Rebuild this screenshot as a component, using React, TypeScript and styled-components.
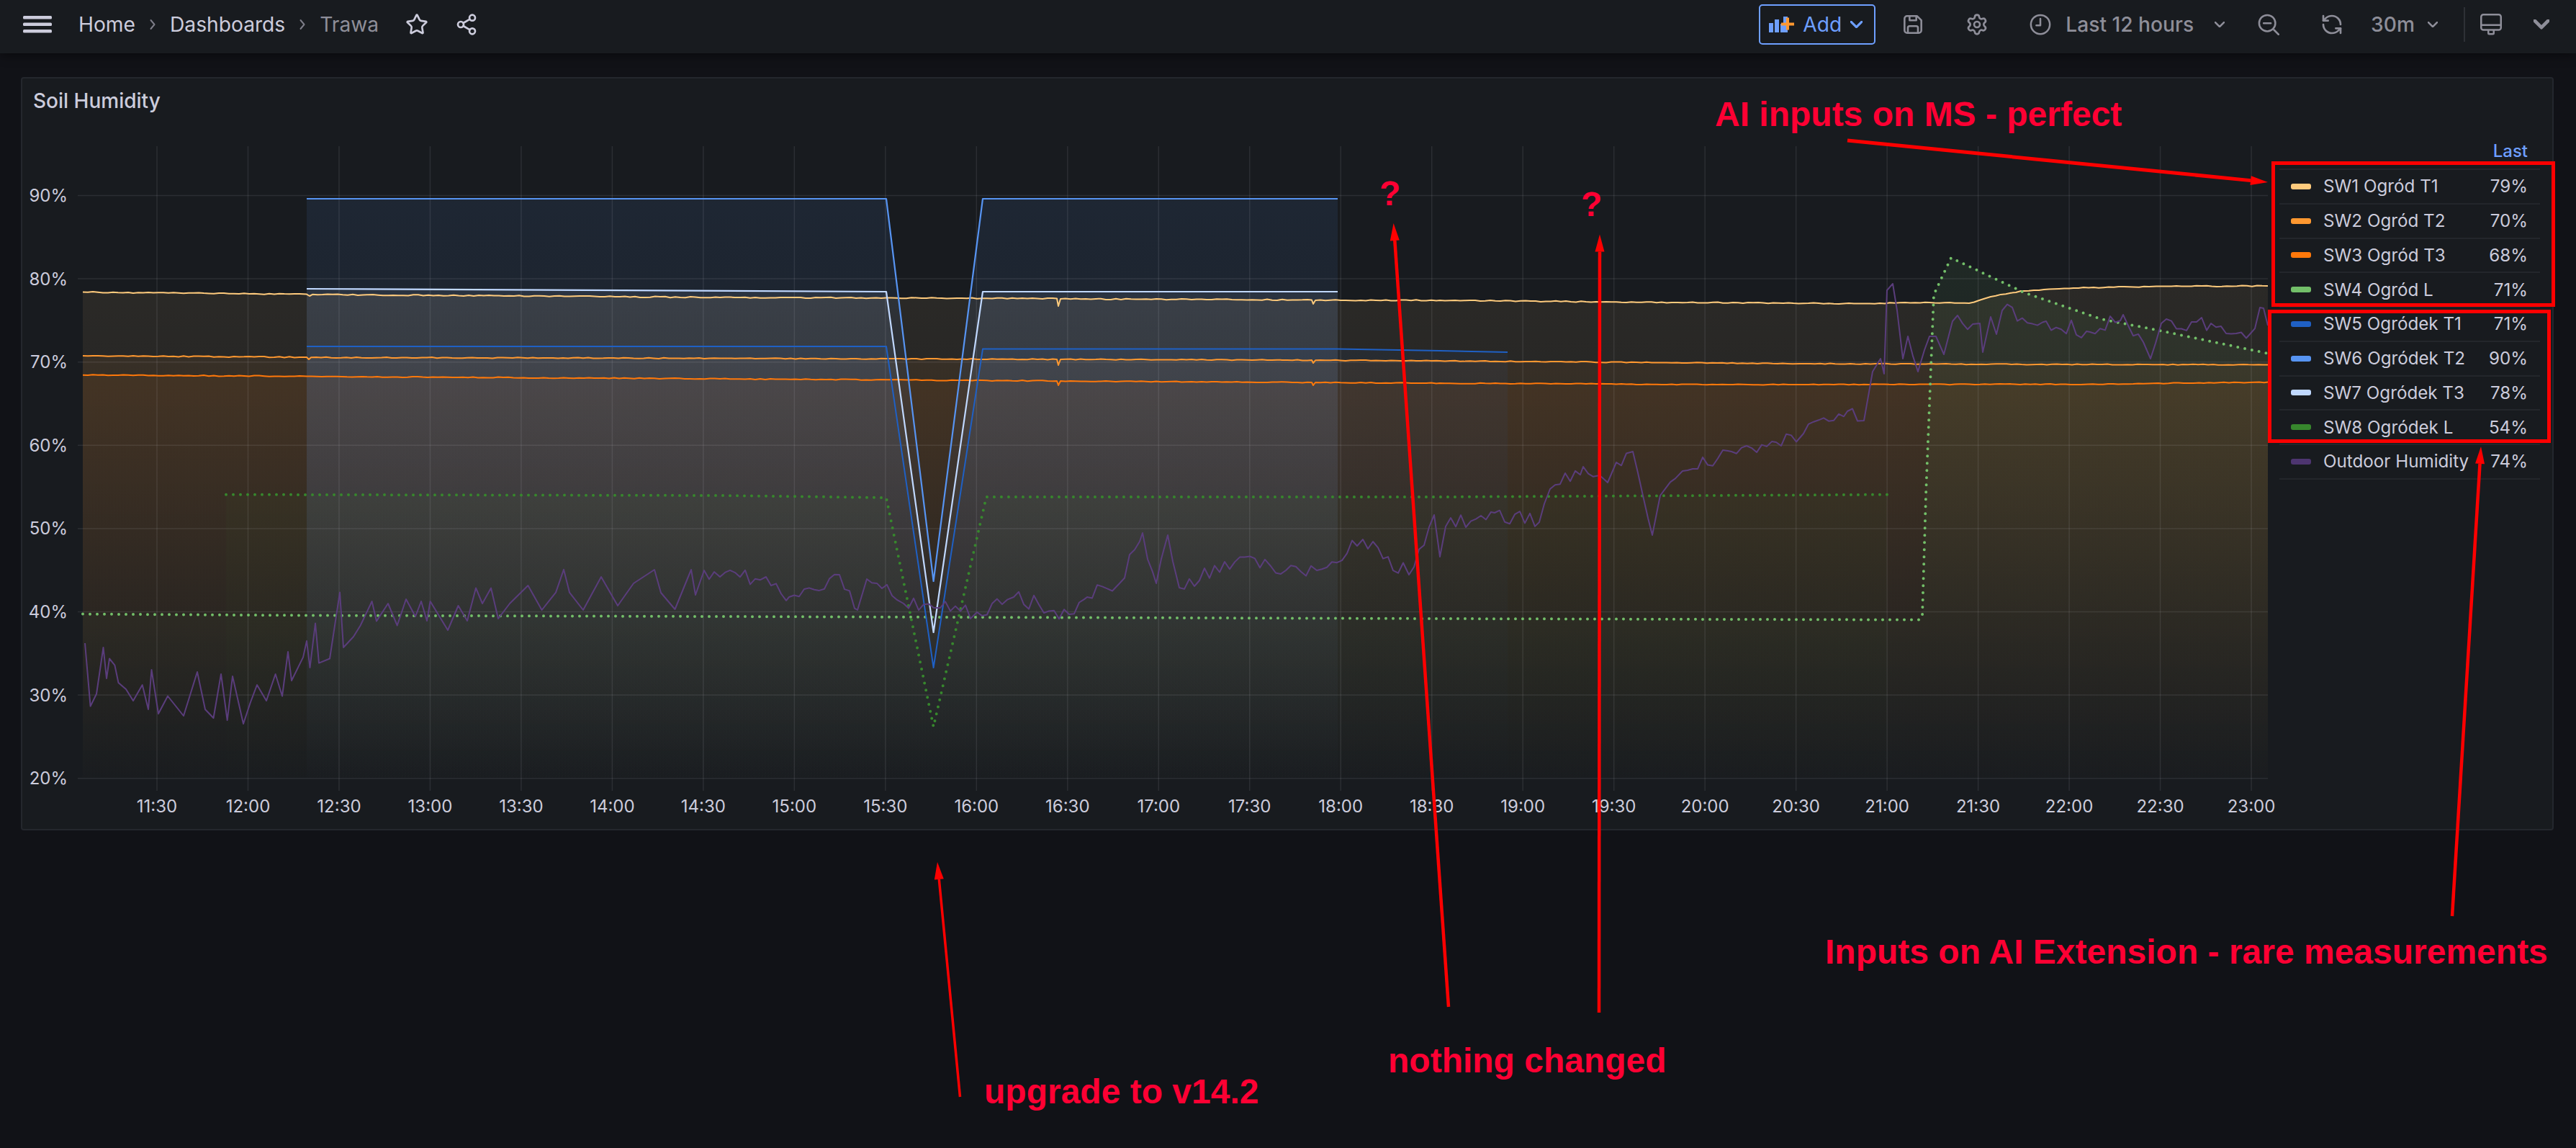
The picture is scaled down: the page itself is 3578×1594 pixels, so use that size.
import { Fragment } from "react";
import styled, { createGlobalStyle } from "styled-components";
import { RefreshCcw, Settings, Share2, Star } from "lucide-react";

type Point = [number, number];

const PLOT_TOP = 205;
const PLOT_BOTTOM = 1100;
const PLOT_LEFT = 108;
const PLOT_RIGHT = 3150;

const GlobalStyle = createGlobalStyle`
  html, body {
    margin: 0;
    background: #111217;
  }
`;

const Styled_Page = styled.div`
  position: relative;
  display: flex;
  flex-direction: column;
  min-height: 100vh;
  overflow: hidden;
  background: #111217;
  color: #ccccdc;
  font-family: Inter, "Noto Sans", sans-serif;
`;

const Styled_TopBar = styled.header`
  display: flex;
  align-items: center;
  flex: none;
  box-sizing: border-box;
  height: 74px;
  padding: 0 37px 6px 32px;
  background: #181b1f;
  box-shadow: 0 3px 14px rgba(0, 0, 0, 0.45);
  font-size: 28.2px;
  position: relative;
  z-index: 1;
`;

const Styled_Tool = styled.span<{ $ml?: number; $muted?: boolean; $color?: string }>`
  display: flex;
  align-items: center;
  flex: none;
  margin-left: ${(p) => p.$ml ?? 0}px;
  color: ${(p) => p.$color ?? (p.$muted ? "#8e8e99" : "#ccccdc")};
  font-weight: ${(p) => (p.$muted ? 500 : 400)};
  white-space: nowrap;
`;

const Styled_Toolbar = styled.div`
  display: flex;
  align-items: center;
  margin-left: auto;
`;

const Styled_AddButton = styled.button`
  display: flex;
  align-items: center;
  width: 162px;
  height: 56px;
  box-sizing: border-box;
  padding: 0 0 0 12px;
  border: 2px solid #6e9fff;
  border-radius: 5px;
  background: transparent;
  color: #6e9fff;
  font: 500 28.2px Inter, sans-serif;
`;

const Styled_Divider = styled.span`
  flex: none;
  width: 2px;
  height: 48px;
  margin-left: 36px;
  background: #2e3136;
`;

const Styled_Main = styled.main`
  flex: 1;
  padding: 33px 31px 0 29px;
`;

const Styled_Panel = styled.section`
  display: flex;
  flex-direction: column;
  box-sizing: border-box;
  height: 1046px;
  border: 2px solid #24272d;
  border-radius: 4px;
  background: #181b1f;
`;

const Styled_PanelTitle = styled.h2`
  flex: none;
  height: 66px;
  margin: 0;
  padding-left: 15px;
  font-size: 28px;
  font-weight: 500;
  line-height: 62px;
`;

const Styled_PanelBody = styled.div`
  display: flex;
  flex: 1;
  min-height: 0;
`;

const Styled_ChartSvg = styled.svg`
  display: block;
  flex: none;
  width: 3129px;
  height: 976px;
`;

const Styled_AxisText = styled.text`
  fill: #ccccdc;
  font-family: Inter, sans-serif;
  font-size: 24px;
`;

const Styled_Legend = styled.div`
  flex: 1;
  padding: 13px 17px 0 6px;
`;

const Styled_LegendHead = styled.div`
  height: 46px;
  padding-right: 17px;
  color: #6e9fff;
  font-size: 24px;
  font-weight: 500;
  line-height: 44px;
  text-align: right;
`;

const Styled_LegendRow = styled.div`
  display: flex;
  align-items: center;
  box-sizing: border-box;
  height: 47.75px;
  padding: 0 17px 0 16px;
  border-top: 2px solid #23262b;
  font-size: 24.2px;

  &:last-child {
    height: 49.75px;
    border-bottom: 2px solid #23262b;
  }
`;

const Styled_Swatch = styled.i<{ $color: string }>`
  flex: none;
  width: 28px;
  height: 8px;
  margin-right: 17px;
  border-radius: 3px;
  background: ${(p) => p.$color};
`;

const Styled_LegendValue = styled.span`
  margin-left: auto;
`;

const Styled_Overlay = styled.svg`
  position: absolute;
  left: 0;
  top: 0;
  z-index: 2;
  width: 3578px;
  height: 1594px;
  pointer-events: none;
`;

const Styled_Note = styled.span<{ $left: number; $baseline: number; $size: number }>`
  position: absolute;
  z-index: 3;
  left: ${(p) => p.$left}px;
  top: ${(p) => p.$baseline - p.$size * 0.8465}px;
  color: #ff0033;
  font-family: "Liberation Sans", Arial, sans-serif;
  font-size: ${(p) => p.$size}px;
  font-weight: 700;
  line-height: 1;
  white-space: nowrap;
`;

function makeRandom(seed: number) {
  let a = seed;
  return () => {
    a = (a + 0x6d2b79f5) | 0;
    let t = Math.imul(a ^ (a >>> 15), 1 | a);
    t = (t + Math.imul(t ^ (t >>> 7), 61 | t)) ^ t;
    return ((t ^ (t >>> 14)) >>> 0) / 4294967296;
  };
}

// sensors report small wobbles: fill the gaps between traced points with noise
function wobble(points: Point[], amp: number, step: number, seed: number, fromX = 0): Point[] {
  const random = makeRandom(seed);
  const out: Point[] = [];
  for (let i = 0; i < points.length - 1; i++) {
    const [x0, y0] = points[i];
    const [x1, y1] = points[i + 1];
    out.push(points[i]);
    if (x0 < fromX || x1 - x0 < step * 2) continue;
    for (let x = x0 + step; x < x1 - step / 2; x += step) {
      const y = y0 + ((y1 - y0) * (x - x0)) / (x1 - x0);
      out.push([x, y + (random() - 0.5) * 2 * amp]);
    }
  }
  out.push(points[points.length - 1]);
  return out;
}

const toPath = (points: Point[]) =>
  points.map(([x, y], i) => `${i ? "L" : "M"}${x.toFixed(1)} ${y.toFixed(1)}`).join("");

const toArea = (points: Point[]) =>
  `${toPath(points)}L${points[points.length - 1][0]} ${PLOT_BOTTOM}L${points[0][0]} ${PLOT_BOTTOM}Z`;

const sw1: Point[] = [
  [115, 407.6], [426, 410.6], [430, 413], [434, 410.8], [1000, 415], [1468, 416.5], [1470, 427], [1473, 417], [1822, 418.5],
  [1824, 424], [1827, 419], [2000, 419], [2330, 422], [2590, 423.5], [2680, 422], [2735, 423], [2765, 414], [2811, 406],
  [2880, 402], [2995, 399.6], [3150, 399]
];
const sw2: Point[] = [
  [115, 496], [426, 498], [429, 501], [432, 498.3], [1000, 499.5], [1468, 501], [1470, 509], [1473, 501], [1822, 502],
  [1824, 506], [1827, 502.3], [2000, 503], [2500, 507], [3150, 508.6]
];
const sw3: Point[] = [
  [115, 522.7], [426, 524.6], [1000, 528], [1468, 531], [1470, 537], [1473, 531], [1822, 533], [1824, 537], [1827, 533],
  [2000, 534], [2400, 536], [2900, 535.6], [3150, 532.5]
];
const sw4: Point[] = [
  [115, 854.6], [426, 856.5], [1000, 858], [2000, 861], [2666, 862.6], [2670, 858], [2675, 690], [2681, 537], [2686, 411],
  [2710, 360], [2811, 408], [2918, 445], [2995, 460], [3150, 492.7]
];
const sw5: Point[] = [[426, 483], [1231, 483], [1296.6, 929], [1365, 486.6], [1858, 486.6], [2000, 489], [2094, 491]];
const sw6: Point[] = [[426, 278], [1231, 278], [1296.6, 809], [1365, 278], [1858, 278]];
const sw7: Point[] = [[426, 403], [1231, 407], [1296.6, 880], [1365, 407], [1858, 407]];
const sw8: Point[] = [[314, 688.7], [1000, 690], [1231, 693], [1296.6, 1011], [1370, 692], [2000, 692], [2621, 688.7]];

const outdoor: Point[] = [
  [118, 895], [125.6, 982.6], [134, 965.5], [143.5, 901], [148, 944], [152, 916.5], [159.4, 925.7], [164.5, 950], [175, 959],
  [185, 975], [197.7, 953], [206, 987], [210.5, 932], [220, 993], [233, 968.5], [255, 996], [274, 935], [285, 987],
  [296.5, 999], [307, 938], [315.7, 1002], [323, 941], [338, 1007], [347.6, 978], [357, 953], [370, 975], [382.6, 938],
  [392, 968.5], [400, 907], [405, 947], [421, 914.6], [426, 892], [430.5, 929], [438, 867.5], [443, 922.6], [458, 916.5],
  [472, 824.6], [477, 901], [491, 886], [500.6, 870.5], [516.6, 837], [523, 864.4], [539, 840], [551.7, 870.5], [564, 834],
  [577, 858], [585, 837], [593, 864], [597.6, 837], [622, 877], [636.5, 843], [649, 864], [661, 818.5], [670, 840],
  [682, 818.5], [692, 861], [708, 840], [733.4, 815], [752.6, 849], [772, 824.6], [783, 792.8], [791, 824.6], [810, 849],
  [835, 803], [858, 843], [880, 812], [909, 793], [918, 825], [937.5, 848], [960, 793], [966, 828], [978, 794],
  [1000, 803], [1064, 803], [1096, 831], [1166, 800], [1191, 849], [1204, 806], [1255, 840], [1306, 846], [1357, 852],
  [1408, 831], [1485, 855], [1510, 831], [1555, 812], [1587, 742], [1606, 812], [1622, 745], [1638, 818], [1701, 782],
  [1765, 788], [1829, 794], [1893, 751], [1957, 800], [1992, 717], [2000, 775], [2008, 733], [2076, 714], [2138, 727],
  [2153, 681], [2199, 650], [2222, 662], [2233, 672], [2245, 644], [2268, 629], [2295, 745], [2306, 690], [2337, 656],
  [2405, 629], [2467, 616], [2505, 604], [2566, 573], [2589, 586], [2601, 518], [2612, 500], [2617, 521], [2621, 405],
  [2629, 396], [2635, 433], [2643, 500], [2650, 469], [2664, 518], [2673, 488], [2689, 469], [2700, 494], [2712, 448],
  [2750, 451], [2754, 491], [2765, 442], [2773, 466], [2781, 433], [2842, 448], [2903, 463], [2949, 439], [2987, 500],
  [3002, 451], [3071, 451], [3125, 466], [3144, 430], [3150, 454]
];

interface Series {
  id: string;
  color: string;
  points: Point[];
  width: number;
  dotted?: boolean;
  filled?: boolean;
}

const series: Series[] = [
  { id: "sw1", color: "#ffcb7d", points: wobble(sw1, 0.7, 7, 1), width: 2, filled: true },
  { id: "sw2", color: "#ff9830", points: wobble(sw2, 0.6, 7, 2), width: 2, filled: true },
  { id: "sw3", color: "#ff780a", points: wobble(sw3, 0.6, 7, 3), width: 2, filled: true },
  { id: "sw4", color: "#73bf69", points: sw4, width: 4, dotted: true, filled: true },
  { id: "sw5", color: "#1f60c4", points: sw5, width: 2, filled: true },
  { id: "sw6", color: "#5794f2", points: sw6, width: 2.2, filled: true },
  { id: "sw7", color: "#c0d8ff", points: sw7, width: 2.2, filled: true },
  { id: "sw8", color: "#37872d", points: sw8, width: 4, dotted: true, filled: true },
  { id: "outdoor", color: "#5a3d7c", points: wobble(outdoor, 11, 7, 4, 978), width: 2 }
];

const legend = [
  { name: "SW1 Ogród T1", value: "79%", color: "#ffcb7d" },
  { name: "SW2 Ogród T2", value: "70%", color: "#ff9830" },
  { name: "SW3 Ogród T3", value: "68%", color: "#ff780a" },
  { name: "SW4 Ogród L", value: "71%", color: "#73bf69" },
  { name: "SW5 Ogródek T1", value: "71%", color: "#1f60c4" },
  { name: "SW6 Ogródek T2", value: "90%", color: "#5794f2" },
  { name: "SW7 Ogródek T3", value: "78%", color: "#c0d8ff" },
  { name: "SW8 Ogródek L", value: "54%", color: "#37872d" },
  { name: "Outdoor Humidity", value: "74%", color: "#4d3570" }
];

const yTicks = [90, 80, 70, 60, 50, 40, 30, 20];
const yOf = (v: number) => 273.5 + (90 - v) * 11.56;
const xTicks = Array.from({ length: 24 }, (_, i) => {
  const minutes = 11 * 60 + 30 + i * 30;
  const label = `${Math.floor(minutes / 60)}:${minutes % 60 === 0 ? "00" : "30"}`;
  return { label, x: 218 + i * 126.48 };
});

function Chart() {
  return (
    <Styled_ChartSvg viewBox="31 177 3129 976">
      <defs>
        {series
          .filter((s) => s.filled)
          .map((s) => (
            <linearGradient key={s.id} id={`fill-${s.id}`} gradientUnits="userSpaceOnUse" x1="0" y1={PLOT_TOP} x2="0" y2={PLOT_BOTTOM}>
              <stop offset="0" stopColor={s.color} stopOpacity="0.105" />
              <stop offset="1" stopColor={s.color} stopOpacity="0" />
            </linearGradient>
          ))}
      </defs>

      {series
        .filter((s) => s.filled)
        .map((s) => (
          <path key={s.id} d={toArea(s.points)} fill={`url(#fill-${s.id})`} />
        ))}

      {yTicks.map((v) => (
        <Fragment key={v}>
          <line x1={PLOT_LEFT} x2={PLOT_RIGHT} y1={yOf(v)} y2={yOf(v)} stroke="rgba(240,245,255,0.09)" strokeWidth="1.5" />
          <Styled_AxisText x="94" y={yOf(v) + 2} textAnchor="end" dominantBaseline="middle">
            {v}%
          </Styled_AxisText>
        </Fragment>
      ))}
      {xTicks.map((t) => (
        <Fragment key={t.label}>
          <line x1={t.x} x2={t.x} y1={PLOT_TOP} y2={PLOT_BOTTOM} stroke="rgba(240,245,255,0.09)" strokeWidth="1.5" />
          <Styled_AxisText x={t.x} y="1123" textAnchor="middle" dominantBaseline="middle">
            {t.label}
          </Styled_AxisText>
        </Fragment>
      ))}

      {series.map((s) => (
        <path
          key={s.id}
          d={toPath(s.points)}
          fill="none"
          stroke={s.color}
          strokeWidth={s.width}
          strokeLinejoin="round"
          strokeLinecap={s.dotted ? "round" : "butt"}
          strokeDasharray={s.dotted ? "0 10" : undefined}
        />
      ))}
    </Styled_ChartSvg>
  );
}

function Arrow({ from, to, width = 4.5 }: { from: Point; to: Point; width?: number }) {
  const [fx, fy] = from;
  const [tx, ty] = to;
  const len = Math.hypot(tx - fx, ty - fy);
  const ux = (tx - fx) / len;
  const uy = (ty - fy) / len;
  const bx = tx - ux * 24;
  const by = ty - uy * 24;
  const nx = -uy * 6.5;
  const ny = ux * 6.5;
  return (
    <>
      <line x1={fx} y1={fy} x2={bx} y2={by} stroke="#ff0000" strokeWidth={width} />
      <polygon points={`${tx},${ty} ${bx + nx},${by + ny} ${bx - nx},${by - ny}`} fill="#ff0000" />
    </>
  );
}

function Annotations() {
  return (
    <>
      <Styled_Overlay viewBox="0 0 3578 1594">
        <rect x="3157.5" y="226.5" width="389" height="197" fill="none" stroke="#ff0000" strokeWidth="5" />
        <rect x="3152.5" y="432.5" width="388" height="180" fill="none" stroke="#ff0000" strokeWidth="5" />
        <Arrow from={[2566, 195]} to={[3150, 253]} width={5} />
        <Arrow from={[2012, 1398]} to={[1935.6, 310]} />
        <Arrow from={[2221, 1406]} to={[2222, 325.5]} />
        <Arrow from={[3406, 1272]} to={[3446, 620]} />
        <Arrow from={[1333.5, 1523]} to={[1302, 1197]} width={3.5} />
      </Styled_Overlay>
      <Styled_Note $left={2382} $baseline={176} $size={48}>AI inputs on MS - perfect</Styled_Note>
      <Styled_Note $left={1916} $baseline={286} $size={48}>?</Styled_Note>
      <Styled_Note $left={2196} $baseline={301} $size={48}>?</Styled_Note>
      <Styled_Note $left={2535} $baseline={1339} $size={48}>Inputs on AI Extension - rare measurements</Styled_Note>
      <Styled_Note $left={1928} $baseline={1490} $size={48}>nothing changed</Styled_Note>
      <Styled_Note $left={1367} $baseline={1533} $size={48}>upgrade to v14.2</Styled_Note>
    </>
  );
}

const MenuIcon = () => (
  <svg width="40" height="24" viewBox="0 0 40 24" fill="currentColor">
    <rect width="40" height="4.5" rx="1.5" y="0" />
    <rect width="40" height="4.5" rx="1.5" y="9.5" />
    <rect width="40" height="4.5" rx="1.5" y="19" />
  </svg>
);

const Chevron = ({ size = 14, width = 2.6 }: { size?: number; width?: number }) => (
  <svg width={size} height={size * 0.62} viewBox="5 8.5 14 8.5" fill="none" stroke="currentColor" strokeWidth={width} strokeLinecap="round" strokeLinejoin="round">
    <path d="M6 9.5l6 6 6-6" />
  </svg>
);

const CrumbArrow = () => (
  <svg width="8" height="16" viewBox="0 0 8 16" fill="none" stroke="#7d7d88" strokeWidth="2" strokeLinecap="round" strokeLinejoin="round">
    <path d="M1.5 2l5 6-5 6" />
  </svg>
);

const AddIcon = () => (
  <svg width="36" height="24" viewBox="0 0 36 24">
    <g fill="#6e9fff">
      <rect x="0" y="10" width="6" height="13" />
      <rect x="8" y="5" width="6" height="18" />
      <rect x="16" y="11" width="6" height="12" />
      <rect x="20" y="1" width="6" height="22" />
    </g>
    <path d="M29 7v7h7v4h-7v6h-4v-6h-7v-4h7V7z" transform="translate(-1 -4.5)" fill="#ff9830" />
  </svg>
);

const SaveIcon = () => (
  <svg width="28" height="28" viewBox="0 0 24 24" fill="none" stroke="currentColor" strokeWidth="2.2" strokeLinejoin="round">
    <path d="M2 5a3 3 0 0 1 3-3h12l5 5v12a3 3 0 0 1-3 3H5a3 3 0 0 1-3-3z" />
    <path d="M8 2v5h8V2M6 22v-6a2 2 0 0 1 2-2h8a2 2 0 0 1 2 2v6" />
  </svg>
);

const ClockIcon = () => (
  <svg width="30" height="30" viewBox="0 0 24 24" fill="none" stroke="currentColor" strokeWidth="2" strokeLinecap="round" strokeLinejoin="round">
    <circle cx="12" cy="12" r="10.5" />
    <path d="M12 5.5V13H7.5" />
  </svg>
);

const ZoomOutIcon = () => (
  <svg width="30" height="30" viewBox="0 0 24 24" fill="none" stroke="currentColor" strokeWidth="2" strokeLinecap="round">
    <circle cx="10.5" cy="10.5" r="9" />
    <path d="M6.5 10.5h8M18 18l5 5" />
  </svg>
);

const MonitorIcon = () => (
  <svg width="30" height="30" viewBox="0 0 24 24" fill="none" stroke="currentColor" strokeWidth="2" strokeLinejoin="round">
    <rect x="1" y="1" width="22" height="17" rx="2.5" />
    <path d="M1 12.5h22M9 18v3.5a1 1 0 0 0 1 1h4a1 1 0 0 0 1-1V18" />
  </svg>
);

function TopBar() {
  return (
    <Styled_TopBar>
      <MenuIcon />
      <Styled_Tool $ml={37}>Home</Styled_Tool>
      <Styled_Tool $ml={20}><CrumbArrow /></Styled_Tool>
      <Styled_Tool $ml={20}>Dashboards</Styled_Tool>
      <Styled_Tool $ml={20}><CrumbArrow /></Styled_Tool>
      <Styled_Tool $ml={20} $color="#8e8e99">Trawa</Styled_Tool>
      <Styled_Tool $ml={37}><Star size={32} strokeWidth={2} /></Styled_Tool>
      <Styled_Tool $ml={37}><Share2 size={32} strokeWidth={2} /></Styled_Tool>

      <Styled_Toolbar>
        <Styled_AddButton>
          <AddIcon />
          <Styled_Tool $ml={11} $color="inherit">Add</Styled_Tool>
          <Styled_Tool $ml={12} $color="inherit"><Chevron size={17} /></Styled_Tool>
        </Styled_AddButton>
        <Styled_Tool $ml={38} $muted><SaveIcon /></Styled_Tool>
        <Styled_Tool $ml={59} $muted><Settings size={32} strokeWidth={2} /></Styled_Tool>
        <Styled_Tool $ml={57} $muted><ClockIcon /></Styled_Tool>
        <Styled_Tool $ml={20} $muted>Last 12 hours</Styled_Tool>
        <Styled_Tool $ml={29} $muted><Chevron /></Styled_Tool>
        <Styled_Tool $ml={46} $muted><ZoomOutIcon /></Styled_Tool>
        <Styled_Tool $ml={57} $muted><RefreshCcw size={32} strokeWidth={2} /></Styled_Tool>
        <Styled_Tool $ml={38} $muted>30m</Styled_Tool>
        <Styled_Tool $ml={18} $muted><Chevron /></Styled_Tool>
        <Styled_Divider />
        <Styled_Tool $ml={21} $muted><MonitorIcon /></Styled_Tool>
        <Styled_Tool $ml={44} $muted><Chevron size={22} width={3} /></Styled_Tool>
      </Styled_Toolbar>
    </Styled_TopBar>
  );
}

export default function App() {
  return (
    <Styled_Page>
      <GlobalStyle />
      <TopBar />
      <Styled_Main>
        <Styled_Panel>
          <Styled_PanelTitle>Soil Humidity</Styled_PanelTitle>
          <Styled_PanelBody>
            <Chart />
            <Styled_Legend>
              <Styled_LegendHead>Last</Styled_LegendHead>
              {legend.map((row) => (
                <Styled_LegendRow key={row.name}>
                  <Styled_Swatch $color={row.color} />
                  {row.name}
                  <Styled_LegendValue>{row.value}</Styled_LegendValue>
                </Styled_LegendRow>
              ))}
            </Styled_Legend>
          </Styled_PanelBody>
        </Styled_Panel>
      </Styled_Main>
      <Annotations />
    </Styled_Page>
  );
}
